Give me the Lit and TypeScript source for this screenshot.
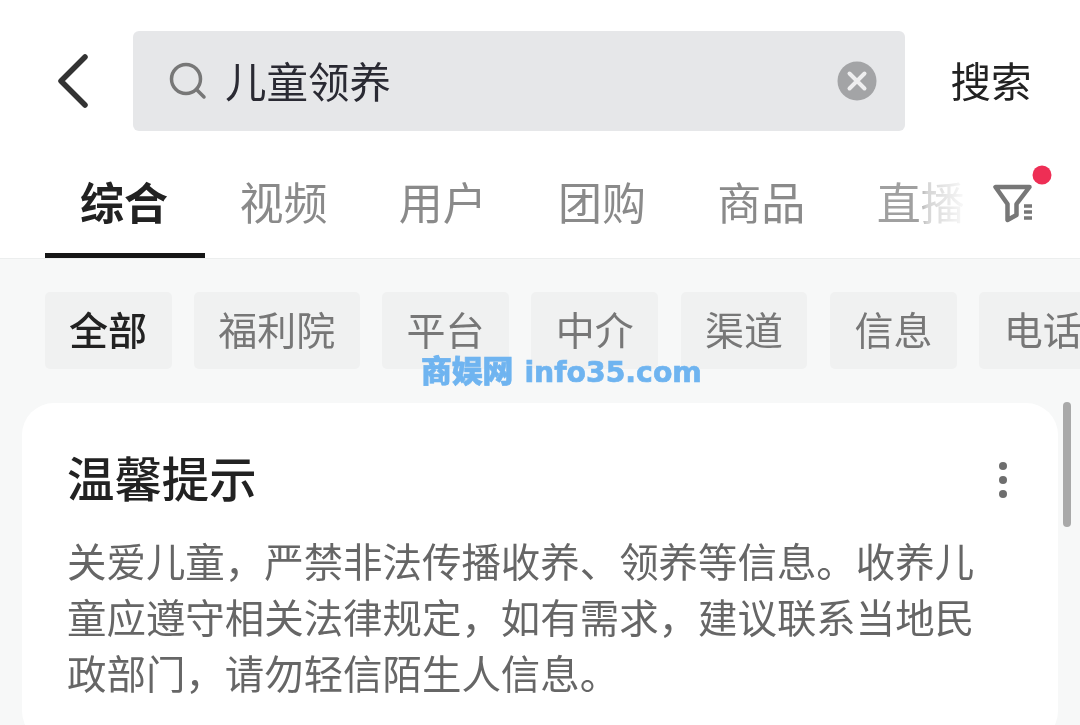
import { LitElement, css, html } from 'lit'
import { customElement } from 'lit/decorators.js'

const TABS = ['综合', '视频', '用户', '团购', '商品', '直播']
const CHIPS = ['全部', '福利院', '平台', '中介', '渠道', '信息', '电话']

@customElement('app-root')
export class AppRoot extends LitElement {
  static styles = css`
    :host {
      display: block;
      position: relative;
      width: 1080px;
      height: 725px;
      overflow: hidden;
      background: #f7f8f8;
      font-family: "Noto Sans CJK SC", "Liberation Sans", sans-serif;
      color: #222;
      filter: blur(0.45px);
    }
    .top {
      background: #fff;
      height: 258px;
      border-bottom: 1px solid #eceeee;
      box-sizing: content-box;
    }
    .search-row {
      display: flex;
      align-items: center;
      height: 100px;
      padding-top: 31px;
    }
    .back {
      width: 133px;
      flex: none;
      display: flex;
    }
    .back svg { margin-left: 53px; }
    .search {
      width: 772px;
      height: 100px;
      flex: none;
      box-sizing: border-box;
      background: #e6e7e9;
      border-radius: 6px;
      display: flex;
      align-items: center;
      padding: 0 28px 0 36px;
    }
    .query {
      align-self: flex-start;
      margin-left: 18px;
      font-size: 41.5px;
      line-height: 98px;
      color: #2a2a33;
      flex: 1;
    }
    .submit {
      align-self: flex-start;
      margin-left: 45.5px;
      font-size: 40.5px;
      line-height: 98px;
      color: #222;
    }
    .tabs {
      position: relative;
      display: flex;
      height: 98px;
      margin-top: 29px;
      padding-left: 45px;
    }
    .tab {
      width: 159.2px;
      flex: none;
      box-sizing: border-box;
      text-align: center;
      text-indent: -2px;
      font-size: 44px;
      line-height: 82px;
      color: #8a8a8a;
      white-space: nowrap;
    }
    .tab.active {
      color: #222;
      font-weight: 700;
      border-bottom: 5px solid #161616;
      height: 98px;
      width: 160px;
    }
    .tab.last {
      width: 86px;
      margin-left: 35px;
      text-indent: 0;
      -webkit-mask-image: linear-gradient(90deg, #000 48%, rgba(0, 0, 0, 0.45) 58%, rgba(0, 0, 0, 0.08) 100%);
      mask-image: linear-gradient(90deg, #000 48%, rgba(0, 0, 0, 0.45) 58%, rgba(0, 0, 0, 0.08) 100%);
      color: #a0a0a0;
    }
    .filter {
      position: absolute;
      left: 990px;
      top: 3px;
    }
    .chips {
      display: flex;
      gap: 22.5px;
      margin-top: 33px;
      padding-left: 45px;
      white-space: nowrap;
    }
    .chip {
      flex: none;
      height: 77px;
      padding: 0 24.4px;
      background: #f0f1f1;
      border-radius: 5px;
      font-size: 39px;
      line-height: 73px;
      color: #777;
    }
    .chip.active {
      color: #222;
      font-weight: 500;
      padding: 0 24.9px 0 23.9px;
      margin-right: -0.5px;
    }
    .card {
      width: 1036px;
      height: 340px;
      margin: 34px 0 0 22px;
      box-sizing: border-box;
      background: #fff;
      border-radius: 32px;
      padding: 44px 46px 0;
      position: relative;
    }
    .card-head {
      display: flex;
      align-items: center;
      justify-content: space-between;
      height: 66px;
    }
    h2 {
      align-self: flex-start;
      margin: 0 0 0 -1px;
      font-size: 47.4px;
      line-height: 60px;
      font-weight: 500;
      color: #222;
    }
    .more {
      display: flex;
      flex-direction: column;
      gap: 6px;
      margin-right: 5px;
    }
    .more i {
      width: 8px;
      height: 8px;
      border-radius: 50%;
      background: #6e6e6e;
    }
    p {
      margin: 19px 0 0 -1px;
      width: 920px;
      font-size: 39.45px;
      line-height: 56px;
      color: #666;
    }
    .scrollbar {
      position: absolute;
      left: 1063px;
      top: 402px;
      width: 8px;
      height: 125px;
      border-radius: 4px;
      background: #a9a9a9;
    }
    .watermark {
      position: absolute;
      left: 421px;
      top: 349px;
      display: flex;
      align-items: baseline;
      gap: 11px;
      font-size: 30.8px;
      line-height: 40px;
      font-weight: 900;
      color: #6fb4f0;
      white-space: nowrap;
      -webkit-text-stroke: 0.7px #6fb4f0;
    }
    .watermark b {
      font-family: "DejaVu Sans", sans-serif;
      font-size: 28.3px;
      font-weight: 700;
    }
  `

  render() {
    return html`
      <div class="top">
        <div class="search-row">
          <div class="back">
            <svg width="36" height="56" viewBox="0 0 36 56" fill="none">
              <path d="M32 4 L8 28 L32 52" stroke="#333" stroke-width="5.5" stroke-linecap="round" stroke-linejoin="round"/>
            </svg>
          </div>
          <div class="search">
            <svg width="38" height="38" viewBox="0 0 38 38" fill="none">
              <circle cx="17" cy="17" r="14.5" stroke="#777" stroke-width="3.5"/>
              <path d="M27.5 27.5 L35 35" stroke="#777" stroke-width="3.5" stroke-linecap="round"/>
            </svg>
            <span class="query">儿童领养</span>
            <svg width="40" height="40" viewBox="0 0 40 40">
              <circle cx="20" cy="20" r="19.5" fill="#a3a4a6"/>
              <path d="M12.5 12.5 L27.5 27.5 M27.5 12.5 L12.5 27.5" stroke="#eeeeef" stroke-width="4" stroke-linecap="round"/>
            </svg>
          </div>
          <span class="submit">搜索</span>
        </div>
        <div class="tabs">
          ${TABS.map((t, i) => html`<div class="tab ${i === 0 ? 'active' : ''} ${i === TABS.length - 1 ? 'last' : ''}">${t}</div>`)}
          <svg class="filter" width="62" height="62" viewBox="0 0 62 62" fill="none">
            <path d="M5.5 24 H39.5 L26.5 41 V52 L17.5 57 V41 Z" stroke="#777" stroke-width="4.5" stroke-linejoin="round"/>
            <path d="M34 43 H42 M34 49 H42 M34 55 H42" stroke="#777" stroke-width="3.5"/>
            <circle cx="52" cy="12" r="9.5" fill="#ee2e55"/>
          </svg>
        </div>
      </div>
      <div class="chips">
        ${CHIPS.map((c, i) => html`<div class="chip ${i === 0 ? 'active' : ''}">${c}</div>`)}
      </div>
      <div class="card">
        <div class="card-head">
          <h2>温馨提示</h2>
          <div class="more"><i></i><i></i><i></i></div>
        </div>
        <p>关爱儿童，严禁非法传播收养、领养等信息。收养儿童应遵守相关法律规定，如有需求，建议联系当地民政部门，请勿轻信陌生人信息。</p>
      </div>
      <div class="scrollbar"></div>
      <div class="watermark"><span>商娱网</span><b>info35.com</b></div>
    `
  }
}
